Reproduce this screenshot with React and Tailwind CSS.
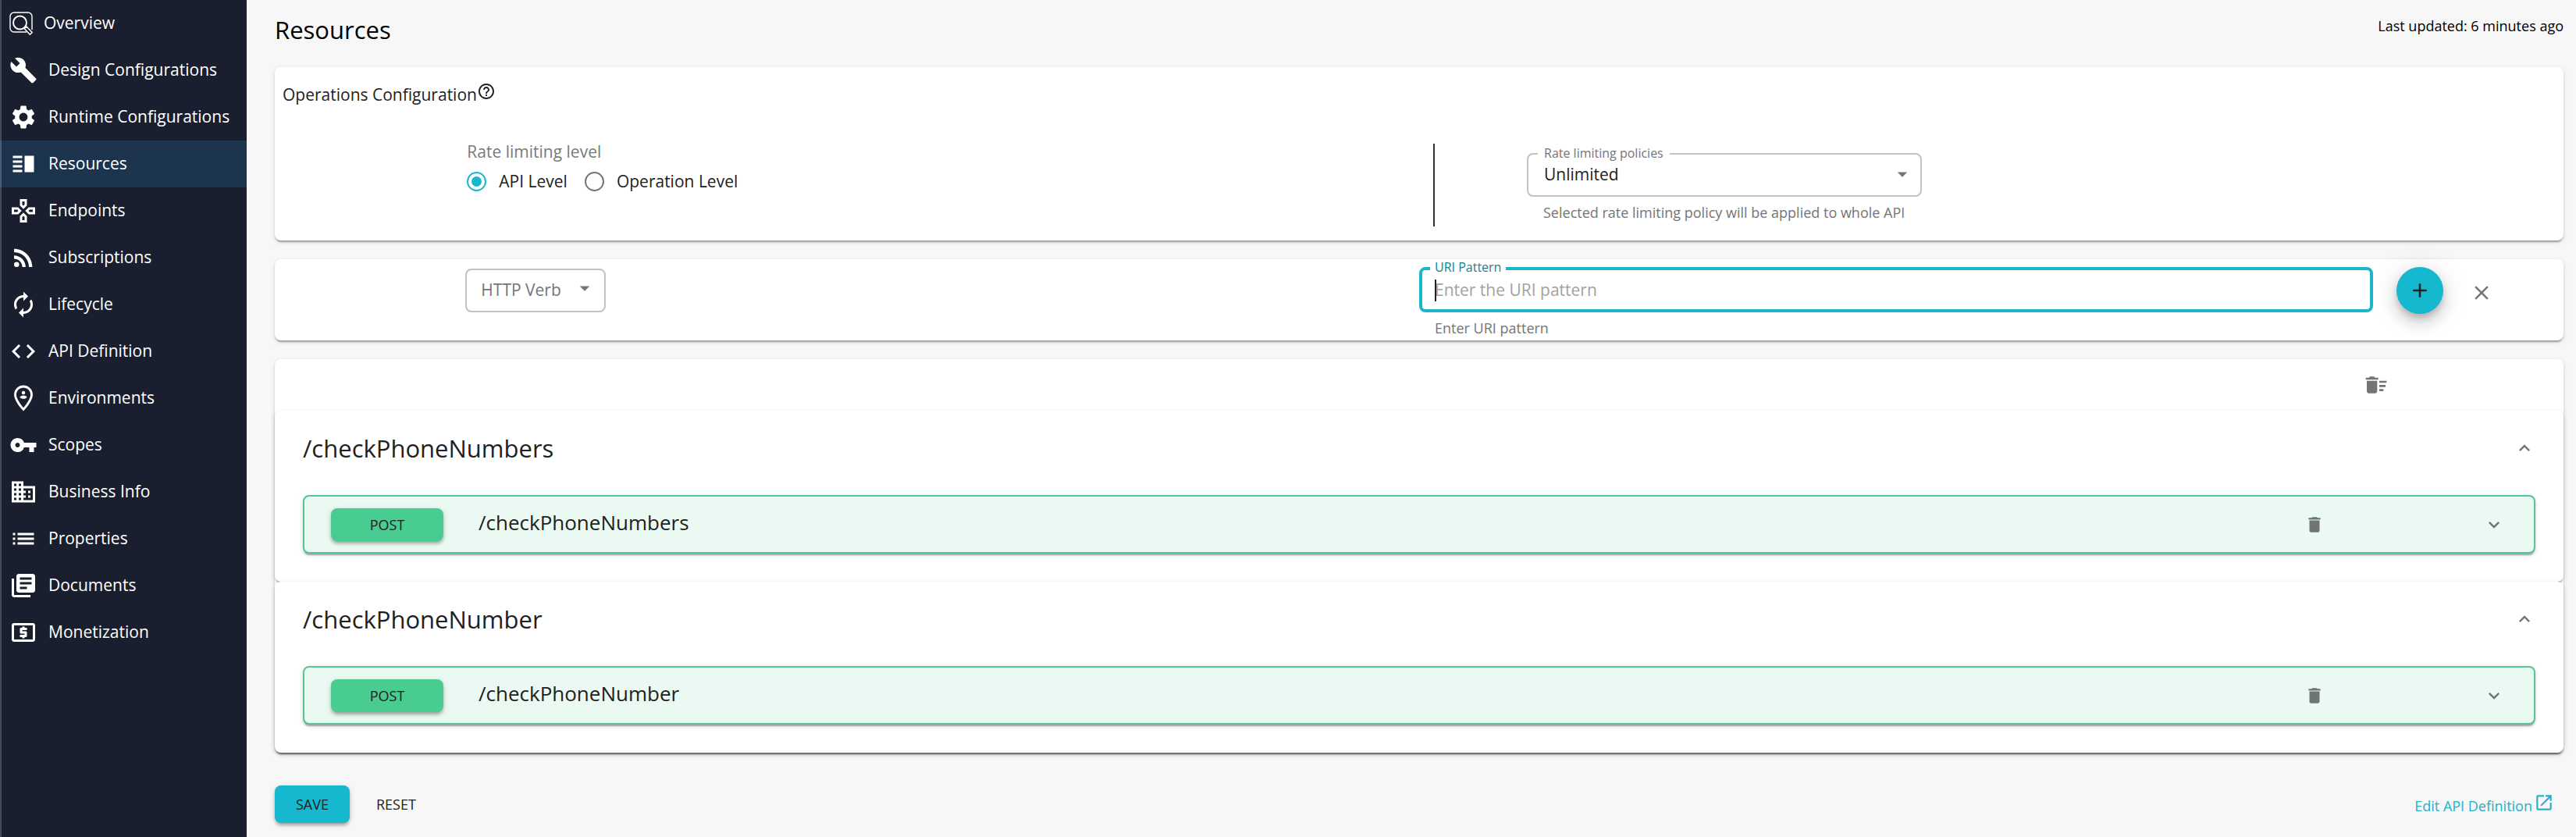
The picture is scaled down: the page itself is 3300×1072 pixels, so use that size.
import { useState } from "react";
import {
  MdAdd,
  MdArrowDropDown,
  MdAutorenew,
  MdBuild,
  MdBusiness,
  MdClose,
  MdCode,
  MdDelete,
  MdDeleteSweep,
  MdExpandLess,
  MdExpandMore,
  MdHelpOutline,
  MdLaunch,
  MdLibraryBooks,
  MdList,
  MdLocalAtm,
  MdOutlineGames,
  MdRssFeed,
  MdSettings,
  MdVerticalSplit,
  MdVpnKey,
} from "react-icons/md";

function OverviewIcon() {
  return (
    <svg width="30" height="30" viewBox="0 0 30 30" fill="none" stroke="currentColor" aria-hidden="true">
      <path d="M22 26H6a5 5 0 0 1-5-5V6a5 5 0 0 1 5-5h18a5 5 0 0 1 5 5v17" strokeWidth="1.4" />
      <circle cx="13.5" cy="14" r="8.5" strokeWidth="1.9" />
      <path d="M19.2 21.8l2.8-2.8 7.2 7.4-2.8 2.9z" strokeWidth="1.5" strokeLinejoin="round" />
    </svg>
  );
}

function PersonPinIcon({ size }) {
  return (
    <svg width={size} height={size} viewBox="0 0 24 24" fill="currentColor" aria-hidden="true">
      <path
        d="M12 2c-3.900 0-7 3.100-7 7 0 5.100 7 12.600 7 12.600s7-7.500 7-12.600c0-3.900-3.100-7-7-7z"
        fill="none"
        stroke="currentColor"
        strokeWidth="1.900"
      />
      <circle cx="12" cy="7.300" r="1.500" />
      <path d="M9 11.300c0-1 1.500-1.600 3-1.600s3 .6 3 1.600c-.8.800-1.800 1.200-3 1.200s-2.200-.4-3-1.200z" />
    </svg>
  );
}

const navItems = [
  { label: "Overview", Icon: OverviewIcon },
  { label: "Design Configurations", Icon: MdBuild },
  { label: "Runtime Configurations", Icon: MdSettings },
  { label: "Resources", Icon: MdVerticalSplit, active: true },
  { label: "Endpoints", Icon: MdOutlineGames },
  { label: "Subscriptions", Icon: MdRssFeed },
  { label: "Lifecycle", Icon: MdAutorenew },
  { label: "API Definition", Icon: MdCode },
  { label: "Environments", Icon: PersonPinIcon },
  { label: "Scopes", Icon: MdVpnKey },
  { label: "Business Info", Icon: MdBusiness },
  { label: "Properties", Icon: MdList },
  { label: "Documents", Icon: MdLibraryBooks },
  { label: "Monetization", Icon: MdLocalAtm },
];

const cardShadow =
  "shadow-[0_4px_2px_-2px_rgba(0,0,0,0.2),0_2px_2px_0_rgba(0,0,0,0.14),0_2px_6px_0_rgba(0,0,0,0.12)]";
const buttonShadow =
  "shadow-[0_4px_4px_-2px_rgba(0,0,0,0.2),0_3px_4px_0_rgba(0,0,0,0.14),0_2px_8px_0_rgba(0,0,0,0.12)]";

function Sidebar() {
  return (
    <nav className="flex w-[316px] shrink-0 flex-col bg-[#1a1f2f] text-white" aria-label="API">
      {navItems.map(({ label, Icon, active }) => (
        <a
          key={label}
          href="#"
          className={`flex h-[60px] items-center gap-3.5 border-l-2 border-white/20 pl-2.5 text-[21px] whitespace-nowrap ${
            active ? "bg-[#1d344f]" : ""
          }`}
        >
          <Icon size={36} />
          {label}
        </a>
      ))}
      <div className="flex-1 border-l-2 border-white/20" />
    </nav>
  );
}

function RateOption({ id, label, checked, onChange }) {
  return (
    <label htmlFor={id} className="flex items-center gap-4 text-[21px] leading-7">
      <input
        id={id}
        type="radio"
        name="rate-level"
        checked={checked}
        onChange={onChange}
        className="size-[25px] appearance-none rounded-full border-2 border-[#757575] p-1 checked:border-[#19b6cd] checked:bg-[#19b6cd] checked:bg-clip-content"
      />
      {label}
    </label>
  );
}

function OperationsCard() {
  const [level, setLevel] = useState("api");
  return (
    <section className={`rounded-lg bg-white pb-[18px] ${cardShadow}`}>
      <div className="flex h-[72px] items-center pl-2.5">
        <h2 className="text-[21px]">Operations Configuration</h2>
        <button type="button" aria-label="Help" className="pb-2.5">
          <MdHelpOutline size={24} />
        </button>
      </div>
      <div className="grid grid-cols-12 pt-[26px]">
        <fieldset className="col-span-5 col-start-2 pl-0.5">
          <legend className="text-[21px] leading-5 text-[#7a7a7a]">Rate limiting level</legend>
          <div className="flex gap-[22px] pt-3.5">
            <RateOption id="level-api" label="API Level" checked={level === "api"} onChange={() => setLevel("api")} />
            <RateOption
              id="level-operation"
              label="Operation Level"
              checked={level === "operation"}
              onChange={() => setLevel("operation")}
            />
          </div>
        </fieldset>
        <div className="col-span-5 col-start-7 flex pl-[18px]">
          <div className="h-[106px] w-0.5 bg-[#303030]" />
          <div className="ml-[118px] pt-3">
            <div className="relative">
              <label
                htmlFor="policy"
                className="absolute -top-2.5 left-3.5 bg-white px-2 text-base leading-5 text-[#757575]"
              >
                Rate limiting policies
              </label>
              <select
                id="policy"
                className="h-14 w-[506px] appearance-none rounded-lg border-2 border-[#c2c2c2] bg-white px-5 text-[21px]"
              >
                <option>Unlimited</option>
              </select>
              <MdArrowDropDown
                size={30}
                className="pointer-events-none absolute top-3 right-2.5 text-[#757575]"
                aria-hidden="true"
              />
            </div>
            <p className="pt-2 pl-[21px] text-lg leading-6 text-[#757575]">
              Selected rate limiting policy will be applied to whole API
            </p>
          </div>
        </div>
      </div>
    </section>
  );
}

function AddResourceCard() {
  return (
    <section className={`grid grid-cols-12 rounded-lg bg-white pt-2.5 ${cardShadow}`}>
      <div className="col-span-5 col-start-2 pt-0.5">
        <div className="relative w-[180px]">
          <select
            aria-label="HTTP Verb"
            className="h-14 w-full appearance-none rounded-lg border-2 border-[#c2c2c2] bg-white px-[18px] text-[21px] text-[#757575]"
          >
            <option>HTTP Verb</option>
          </select>
          <MdArrowDropDown
            size={30}
            className="pointer-events-none absolute top-2.5 right-3 text-[#757575]"
            aria-hidden="true"
          />
        </div>
      </div>
      <div className="col-span-5 col-start-7">
        <div className="relative">
          <label
            htmlFor="uri"
            className="absolute -top-2.5 left-3.5 bg-white px-1.5 text-base leading-5 text-[#128293]"
          >
            URI Pattern
          </label>
          <input
            id="uri"
            type="text"
            placeholder="Enter the URI pattern"
            className="h-[58px] w-full rounded-lg border-4 border-[#1bb6cd] bg-white px-4 text-[21px] outline-none placeholder:text-[#a2a2a2]"
          />
          <span className="pointer-events-none absolute top-4 left-5 h-7 w-0.5 bg-[#212121]" aria-hidden="true" />
        </div>
        <p className="pt-2 pb-1 pl-5 text-lg leading-6 text-[#757575]">Enter URI pattern</p>
      </div>
      <div className="col-start-12 flex items-start pl-[30px]">
        <button
          type="button"
          aria-label="Add"
          className="flex size-[60px] items-center justify-center rounded-full bg-[#15b8cf] shadow-[0_6px_10px_-2px_rgba(0,0,0,0.2),0_12px_20px_0_rgba(0,0,0,0.14),0_2px_36px_0_rgba(0,0,0,0.12)]"
        >
          <MdAdd size={30} />
        </button>
        <button type="button" aria-label="Clear" className="ml-[34px] pt-[18px] text-[#757575]">
          <MdClose size={30} />
        </button>
      </div>
    </section>
  );
}

function ResourceGroup({ path }) {
  return (
    <section className={`rounded-lg bg-white px-9 pb-9 ${cardShadow}`}>
      <div className="mb-3 flex h-24 items-center justify-between">
        <h2 className="text-[31px]">{path}</h2>
        <button type="button" aria-label={`Collapse ${path}`} className="text-[#757575]">
          <MdExpandLess size={28} />
        </button>
      </div>
      <div className={`flex h-[75px] items-center rounded-lg border-2 border-[#55c694] bg-[#eaf9f2] pr-[37px] pl-[34px] ${cardShadow}`}>
        <button type="button" className={`h-[42px] w-36 rounded-lg bg-[#49cc90] text-lg ${buttonShadow}`}>
          POST
        </button>
        <h3 className="ml-[45px] flex-1 pb-1 text-[26px]">{path}</h3>
        <button type="button" aria-label={`Delete ${path}`} className="mr-[203px] text-[#6e7573]">
          <MdDelete size={26} />
        </button>
        <button type="button" aria-label={`Expand POST ${path}`} className="text-[#6e7573]">
          <MdExpandMore size={28} />
        </button>
      </div>
    </section>
  );
}

export default function App() {
  return (
    <div className="flex min-h-screen bg-[#f7f7f7] font-['Open_Sans',sans-serif] text-[#212121]">
      <Sidebar />
      <main className="min-w-0 flex-1 pr-4 pl-9">
        <header className="flex h-[86px] justify-between text-black">
          <h1 className="pt-[18px] text-[31px] leading-10">Resources</h1>
          <p className="pt-[21px] text-lg leading-6">Last updated: 6 minutes ago</p>
        </header>
        <div className="flex flex-col gap-6">
          <OperationsCard />
          <AddResourceCard />
          <div className={`rounded-lg bg-white ${cardShadow}`}>
            <div className="flex h-[66px] items-center justify-end pr-[224px]">
              <button type="button" aria-label="Delete all" className="text-[#757575]">
                <MdDeleteSweep size={32} />
              </button>
            </div>
            <ResourceGroup path="/checkPhoneNumbers" />
            <ResourceGroup path="/checkPhoneNumber" />
          </div>
        </div>
        <footer className="flex items-center pt-[42px] pr-3 pb-4">
          <button type="button" className={`h-12 w-24 rounded-lg bg-[#15b8cf] text-lg ${buttonShadow}`}>
            SAVE
          </button>
          <button type="button" className="ml-[18px] h-12 rounded-lg px-4 text-lg">
            RESET
          </button>
          <a href="#" className="ml-auto flex items-center gap-0.5 pt-1 text-lg text-[#27b0c6]">
            Edit API Definition
            <MdLaunch size={26} className="mb-2" />
          </a>
        </footer>
      </main>
    </div>
  );
}
